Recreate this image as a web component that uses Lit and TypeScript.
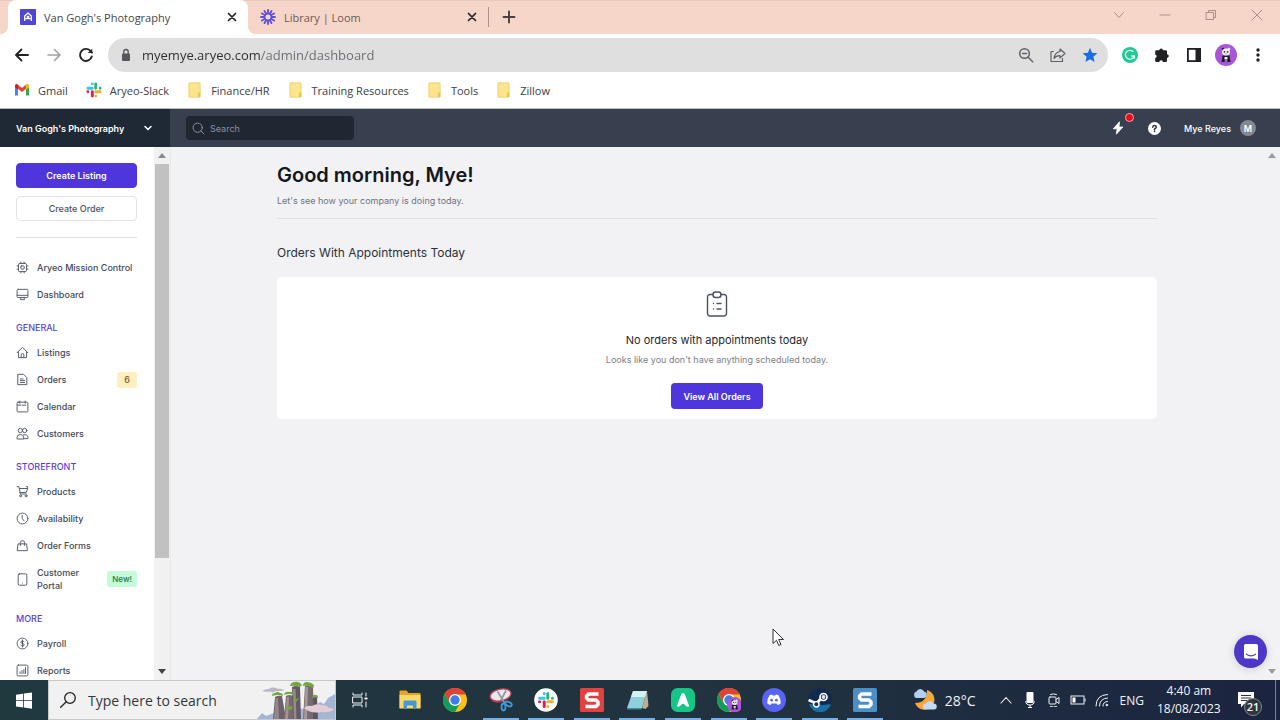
import { LitElement, html, svg, css, nothing, type TemplateResult } from "lit";
import { customElement, property } from "lit/decorators.js";
import { classMap } from "lit/directives/class-map.js";

/* ---------- shared drawing helpers ---------- */

const line = (size: number, body: TemplateResult, box = 24, stroke = 1.5) => html`<svg
  width=${size}
  height=${size}
  viewBox="0 0 ${box} ${box}"
  fill="none"
  stroke="currentColor"
  stroke-width=${stroke}
  stroke-linecap="round"
  stroke-linejoin="round"
  aria-hidden="true"
>${body}</svg>`;

const art = (w: number, h: number, body: TemplateResult) => html`<svg
  width=${w}
  height=${h}
  viewBox="0 0 ${w} ${h}"
  aria-hidden="true"
>${body}</svg>`;

const slackMark = svg`
  <g stroke-width="2.9" stroke-linecap="round" fill="none">
    <path d="M6.3 1.9v.01M1.9 6.3H6.3" stroke="#36c5f0"/>
    <path d="M9.7 1.9V6.3M14.1 6.3v.01" stroke="#2eb67d"/>
    <path d="M9.7 9.7H14.1M9.7 14.1v.01" stroke="#ecb22e"/>
    <path d="M6.3 9.7V14.1M1.9 9.7v.01" stroke="#e01e5a"/>
  </g>`;

const chromeMark = svg`
  <circle cx="12" cy="12" r="12" fill="#fbc116"/>
  <path d="M1.600 6A12 12 0 0 0 12 24l5.200-9L6.800 15Z" fill="#0f9d58"/>
  <path d="M12 6.500H22.700A12 12 0 0 0 1.600 6l5.200 9Z" fill="#db4437"/>
  <circle cx="12" cy="12" r="6" fill="#fff"/>
  <circle cx="12" cy="12" r="4.700" fill="#3f7ee8"/>`;

const panda = svg`
  <circle cx="11" cy="11" r="11" fill="#a855d8"/>
  <path d="M7.500 11.500h7l1 6.500H12.300v-2h-2.600v2H6.500z" fill="#1c1c22"/>
  <path d="M9.500 13h3v2.500h-3z" fill="#f4f4f4"/>
  <circle cx="8" cy="5" r="1.300" fill="#1c1c22"/>
  <circle cx="14" cy="5" r="1.300" fill="#e9e9ee"/>
  <ellipse cx="11" cy="8" rx="4" ry="3.500" fill="#f4f4f4"/>
  <circle cx="9.400" cy="7.800" r=".9" fill="#333"/>
  <circle cx="12.600" cy="7.800" r=".9" fill="#333"/>
  <path d="M10.300 9.600h1.400l-.7.800z" fill="#333"/>`;

const folder = html`${art(16, 16, svg`
  <path d="M2.500.8h10q.7 0 .7.700v13q0 .7-.7.700h-10q-.7 0-.7-.7v-13q0-.7.700-.7z" fill="#fbe48d" stroke="#ecd06b" stroke-width=".8"/>
  <path d="M11 15v-3.500q0-1 1-1h1.200V15z" fill="#e9c64f"/>`)}`;

/* ---------- browser chrome ---------- */

@customElement("browser-chrome")
export class BrowserChrome extends LitElement {
  static styles = css`
    :host {
      display: block;
      font-family: "Open Sans", "Noto Sans", sans-serif;
      color: #3c4043;
      background: #fff;
      border-bottom: 1px solid #b9bcc0;
    }
    svg { display: block; flex: none; }
    button, a { color: inherit; font: inherit; text-decoration: none; }
    button {
      border: 0;
      padding: 0;
      background: none;
      display: grid;
      place-items: center;
    }
    .strip {
      display: flex;
      height: 34px;
      padding-left: 8px;
      box-sizing: border-box;
      background: #f7d6ca;
      box-shadow: inset 0 1px #ecc8bc;
    }
    .tab {
      display: flex;
      align-items: center;
      width: 240px;
      padding: 0 8px 0 12px;
      box-sizing: border-box;
      gap: 8px;
      font-size: 12px;
      position: relative;
      color: #6d5a56;
    }
    .tab.active { background: #fff; border-radius: 8px 8px 0 0; color: #45474a; }
    .tab.active::before, .tab.active::after {
      content: "";
      position: absolute;
      bottom: 0;
      width: 8px;
      height: 8px;
    }
    .tab.active::before { left: -8px; background: radial-gradient(circle at 0 0, transparent 8px, #fff 8px); }
    .tab.active::after { right: -8px; background: radial-gradient(circle at 100% 0, transparent 8px, #fff 8px); }
    .tab .name { flex: 1; white-space: nowrap; font-size: 11px; }
    .close { width: 16px; height: 16px; color: #222; }
    .rule { width: 1px; height: 20px; margin: auto 0; background: #ae918a; }
    .new { width: 40px; color: #4a3f3d; }
    .window { margin-left: auto; display: flex; color: #a98f87; }
    .window button { width: 46px; height: 30px; }
    .bar { display: flex; align-items: center; height: 42px; padding: 0 6px; color: #202124; }
    .bar button { width: 32px; height: 32px; }
    .bar .off { color: #a0a2a5; }
    .omni {
      flex: 1;
      min-width: 0;
      display: flex;
      align-items: center;
      height: 34px;
      margin: 0 6px;
      padding: 0 2px;
      box-sizing: border-box;
      border-radius: 17px;
      background: #dfdfdf;
      color: #5f6368;
    }
    .omni input {
      flex: 1;
      min-width: 0;
      border: 0;
      padding: 0;
      outline: 0;
      font: 13px "Open Sans", "Noto Sans", sans-serif;
      color: transparent;
      background: linear-gradient(90deg, #2b2d30 119px, #686c71 119px);
      background-clip: text;
      -webkit-background-clip: text;
    }
    .marks { display: flex; gap: 18px; height: 32px; padding: 0 14px; }
    .marks a { display: flex; align-items: center; gap: 8px; font-size: 11px; height: 28px; white-space: nowrap; }
  `;

  render() {
    const cross = line(16, svg`<path d="M4.500 4.500l7 7m0-7l-7 7"/>`, 16, 1.7);
    return html`
      <div class="strip">
        <div class="tab active">
          ${art(16, 16, svg`<rect width="16" height="16" rx="1" fill="#5145d8"/>
            <path d="M4.700 12V7L8 4l3.300 3v5M5.500 9.700h5M6.700 8.500L8 7.300l1.300 1.200" fill="none" stroke="#fff" stroke-width="1.300" stroke-linejoin="round"/>`)}
          <span class="name">Van Gogh's Photography</span>
          <button class="close" aria-label="Close tab">${cross}</button>
        </div>
        <div class="tab">
          ${art(16, 16, svg`<g stroke="#5f4fe0" stroke-width="1.900" stroke-linecap="round">
            ${[0, 30, 60, 90, 120, 150, 180, 210, 240, 270, 300, 330].map(
              (a) => svg`<path d="M8 4.600V1" transform="rotate(${a} 8 8)"/>`)}
            </g><circle cx="8" cy="8" r="3.500" fill="none" stroke="#5f4fe0" stroke-width="1.300"/>`)}
          <span class="name">Library | Loom</span>
          <button class="close" aria-label="Close tab">${cross}</button>
        </div>
        <div class="rule"></div>
        <button class="new" aria-label="New tab">${line(16, svg`<path d="M8 2.500v11M2.500 8h11"/>`, 16, 1.9)}</button>
        <div class="window">
          <button aria-label="Search tabs">${line(12, svg`<path d="M1.500 3.500L6 8.500l4.500-5"/>`, 12, 1)}</button>
          <button aria-label="Minimize">${line(12, svg`<path d="M1 6h10"/>`, 12, 1)}</button>
          <button aria-label="Restore">${line(12, svg`<path d="M1.500 3.500h7v7h-7zM3.500 3.500v-2h7v7h-2"/>`, 12, 1)}</button>
          <button aria-label="Close">${line(12, svg`<path d="M1 1l10 10M11 1L1 11"/>`, 12, 1)}</button>
        </div>
      </div>
      <div class="bar">
        <button aria-label="Back">${line(16, svg`<path d="M14 8H2.500M7.500 2.500L2 8l5.500 5.500"/>`, 16, 1.8)}</button>
        <button class="off" aria-label="Forward">${line(16, svg`<path d="M2 8h11.500M8.500 2.500L14 8l-5.500 5.500"/>`, 16, 1.6)}</button>
        <button aria-label="Reload">${line(16, svg`<path d="M13.800 9.500A6 6 0 1 1 12.800 4.300L14 5.600"/><path d="M14.200 1.700v4.400H9.800z" fill="currentColor" stroke="none"/>`, 16, 1.9)}</button>
        <div class="omni">
          <button aria-label="Site information">${art(12, 14, svg`<rect x="2" y="5.500" width="8" height="7.500" rx="1" fill="#54575b"/><path d="M3.800 6V3.700a2.200 2.200 0 0 1 4.400 0V6" fill="none" stroke="#54575b" stroke-width="1.300"/>`)}</button>
          <input aria-label="Address" value="myemye.aryeo.com/admin/dashboard" />
          <button aria-label="Zoom">${line(16, svg`<circle cx="6.500" cy="6.500" r="4.800"/><path d="M10.200 10.200l4.500 4.500M4.500 6.500h4"/>`, 16, 1.5)}</button>
          <button aria-label="Share">${line(16, svg`<path d="M3.500 4.500H1v10h11.500v-3"/><path d="M10 2l5 4.500-5 4.500V8.700C7.500 8.600 5.500 9.500 4 11.500 4.500 8 6.500 5 10 4.500z"/>`, 16, 1.2)}</button>
          <button aria-label="Bookmark">${art(16, 16, svg`<path d="M8 .8l2.100 5 5.300.5-4 3.500 1.200 5.300L8 12.300l-4.600 2.800 1.200-5.300-4-3.500 5.300-.5z" fill="#1a6fe0"/>`)}</button>
        </div>
        <button aria-label="Grammarly">${art(16, 16, svg`<circle cx="8" cy="8" r="8" fill="#22c994"/><path d="M11.500 5A4.500 4.500 0 1 0 12.300 9H9.300M12.400 8.800v3" fill="none" stroke="#e6fff6" stroke-width="1.300"/>`)}</button>
        <button aria-label="Extensions">${art(16, 16, svg`<path d="M5.300 3.200a1.800 1.800 0 0 1 3.600 0h2.900q1.200 0 1.200 1.200v2.900a1.800 1.800 0 0 1 0 3.600v2.900q0 1.200-1.200 1.200H8.900a1.800 1.800 0 0 0-3.600 0H2.400q-1.200 0-1.200-1.200v-2.700a1.900 1.900 0 0 0 0-3.700v-3q0-1.200 1.200-1.200z" fill="#202124"/>`)}</button>
        <button aria-label="Side panel">${art(16, 16, svg`<rect x="1.900" y="1.900" width="12.200" height="12.200" fill="none" stroke="#202124" stroke-width="1.800"/><path d="M9.500 1.500h5v13h-5z" fill="#202124"/>`)}</button>
        <button aria-label="Profile">${art(22, 22, panda)}</button>
        <button aria-label="Menu">${art(4, 14, svg`<g fill="#202124"><circle cx="2" cy="2" r="1.700"/><circle cx="2" cy="7" r="1.700"/><circle cx="2" cy="12" r="1.700"/></g>`)}</button>
      </div>
      <nav class="marks">
        <a href="#">${art(16, 16, svg`<path d="M1 13.500V4l3 2.500v7z" fill="#4285f4"/><path d="M15 13.500V4l-3 2.500v7z" fill="#34a853"/><path d="M1 4.500v-1q1-2 3-.7L8 6l4-3.200q2-1.300 3 .7v1L8 10z" fill="#ea4335"/><path d="M12 2.800q2-1.300 3 .7v1.700L12 7.500z" fill="#fbbc04"/><path d="M4 2.800Q2 1.500 1 3.500v1.700L4 7.500z" fill="#c5221f"/>`)}Gmail</a>
        <a href="#">${art(16, 16, slackMark)}Aryeo-Slack</a>
        ${["Finance/HR", "Training Resources", "Tools", "Zillow"].map((n) => html`<a href="#">${folder}${n}</a>`)}
      </nav>
    `;
  }
}

/* ---------- admin sidebar ---------- */

interface NavItem { label: string; icon: TemplateResult; badge?: string; tone?: string }
interface NavGroup { title?: string; items: NavItem[] }

const groups: NavGroup[] = [
  {
    items: [
      { label: "Aryeo Mission Control", icon: svg`<rect x="4.500" y="4.500" width="15" height="15" rx="2.500"/><rect x="9" y="9" width="6" height="6" rx="1"/><path d="M9 4.500V2M15 4.500V2M9 22v-2.500M15 22v-2.500M4.500 9H2M4.500 15H2M22 9h-2.500M22 15h-2.500"/>` },
      { label: "Dashboard", icon: svg`<rect x="2" y="2.500" width="20" height="15" rx="2"/><path d="M2 13.500h20M9.500 17.500l-1.500 4h8l-1.500-4"/>` },
    ],
  },
  {
    title: "General",
    items: [
      { label: "Listings", icon: svg`<path d="M2 12.500L12 2.500l10 10M4.500 10.500V21.500h15v-11M9.500 21.500v-5a2.500 2.500 0 0 1 5 0v5"/>` },
      { label: "Orders", badge: "6", tone: "amber", icon: svg`<path d="M4 2.500h10l6 6v13H4zM8 11h5M8 14h8M8 17.500h8"/>` },
      { label: "Calendar", icon: svg`<rect x="2" y="4" width="20" height="18" rx="2"/><path d="M2.500 9.500h7M12 9.500h6M7 6V2M17 6V2"/>` },
      { label: "Customers", icon: svg`<circle cx="8" cy="6.500" r="4"/><circle cx="16" cy="6.500" r="4"/><path d="M2 21.500v-2.500q0-5 6-5t6 5v2.500zM14 14.500q8-1.500 8 4.500v2.500h-8"/>` },
    ],
  },
  {
    title: "Storefront",
    items: [
      { label: "Products", icon: svg`<path d="M2 3h3.500l2.500 13.500h11M6.200 6.500H21.500L19 13.500 7.500 14"/><path d="M21.500 6.500V3H19"/><circle cx="8.500" cy="20" r="1.800"/><circle cx="18.500" cy="20" r="1.800"/>` },
      { label: "Availability", icon: svg`<circle cx="12" cy="12" r="10"/><path d="M11.500 6v6l3.500 4.500"/>` },
      { label: "Order Forms", icon: svg`<path d="M4.500 9h15l1.500 12.500H3zM8 12V7a4 4 0 0 1 8 0v5"/>` },
      { label: "Customer Portal", badge: "New!", tone: "green", icon: svg`<rect x="4" y="1.500" width="16" height="21" rx="2.500"/><path d="M12 18.500v.01"/>` },
    ],
  },
  {
    title: "More",
    items: [
      { label: "Payroll", icon: svg`<circle cx="12" cy="12" r="10"/><path d="M15 9q-1-1.700-3-1.700-3 0-3 2.300 0 2 3 2.400t3 2.400q0 2.300-3 2.300-2 0-3-1.700M12 5.500v13"/>` },
      { label: "Reports", icon: svg`<rect x="2" y="2" width="20" height="20" rx="2.500"/><path d="M7.500 17.500v-3M11 17.500v-5M14.500 17.500v-7M17.500 17.500v-11"/>` },
    ],
  },
];

@customElement("side-nav")
export class SideNav extends LitElement {
  static styles = css`
    :host {
      display: flex;
      flex: none;
      width: 170px;
      background: #fff;
      font-family: Inter, sans-serif;
      overflow: hidden;
    }
    svg { display: block; flex: none; }
    .content { flex: 1; min-width: 0; padding: 16px 17px 0 16px; overflow: hidden; }
    .actions { display: grid; gap: 8px; padding-bottom: 16px; border-bottom: 1px solid #e2e3e8; margin-bottom: 16px; }
    button {
      height: 25px;
      border: 1px solid #e3e4e8;
      border-radius: 4px;
      padding: 0;
      font: 500 9px Inter, sans-serif;
      background: #fff;
      color: #50535f;
    }
    button.primary { background: #4f35dc; border-color: #4f35dc; color: #fff; font-weight: 600; }
    h2 {
      margin: 12px 0 3px;
      font-size: 9px;
      font-weight: 500;
      line-height: 16px;
      text-transform: uppercase;
      color: #5a3fd8;
    }
    ul { margin: 0; padding: 0; list-style: none; }
    a {
      display: flex;
      align-items: center;
      gap: 8px;
      padding: 7px 0;
      font-size: 9px;
      font-weight: 500;
      line-height: 13px;
      color: #434959;
      text-decoration: none;
    }
    a svg { color: #565c6d; }
    .label { flex: 1; }
    .single { white-space: nowrap; }
    .badge { margin: -2px 0; padding: 1px 5px; border-radius: 3px; font-size: 8px; line-height: 14px; }
    .amber { background: #fdefbf; color: #8a5a28; padding: 1px 7px; font-size: 9px; }
    .green { background: #c4fbd9; color: #23794c; }
    .scroll { width: 16px; background: #f1f1f1; display: flex; flex-direction: column; align-items: center; }
    .scroll svg { margin: 6px 0; }
    .track { flex: 1; width: 14px; }
    .thumb { height: 79%; background: #c1c1c1; }
  `;

  render() {
    return html`
      <div class="content">
        <div class="actions">
          <button class="primary">Create Listing</button>
          <button>Create Order</button>
        </div>
        <nav>
          ${groups.map((g) => html`
            ${g.title ? html`<h2>${g.title}</h2>` : nothing}
            <ul>
              ${g.items.map((i) => html`<li><a href="#">
                ${line(13, i.icon, 24, 1.8)}
                <span class=${classMap({ label: true, single: !i.badge })}>${i.label}</span>
                ${i.badge ? html`<span class="badge ${i.tone}">${i.badge}</span>` : nothing}
              </a></li>`)}
            </ul>`)}
        </nav>
      </div>
      <div class="scroll" aria-hidden="true">
        ${art(8, 5, svg`<path d="M4 0l4 5H0z" fill="#8b8b8b"/>`)}
        <div class="track"><div class="thumb"></div></div>
        ${art(8, 5, svg`<path d="M4 5l4-5H0z" fill="#444"/>`)}
      </div>
    `;
  }
}

/* ---------- admin page ---------- */

@customElement("admin-page")
export class AdminPage extends LitElement {
  static styles = css`
    :host {
      display: flex;
      flex-direction: column;
      min-height: 0;
      font-family: Inter, sans-serif;
      background: #f2f2f5;
      position: relative;
    }
    svg { display: block; flex: none; }
    button { font: inherit; border: 0; padding: 0; background: none; color: inherit; }
    header { display: flex; height: 38px; flex: none; background: #383f4f; color: #fff; font-size: 9px; }
    .company {
      width: 170px;
      box-sizing: border-box;
      padding: 0 18px 0 16px;
      display: flex;
      align-items: center;
      justify-content: space-between;
      background: #1f2835;
      font-weight: 600;
    }
    .search {
      display: flex;
      align-items: center;
      gap: 5px;
      width: 168px;
      height: 24px;
      box-sizing: border-box;
      margin: 7px 0 0 16px;
      padding: 0 6px;
      border-radius: 4px;
      background: #1f2733;
      color: #8b919c;
    }
    .search input { flex: 1; min-width: 0; border: 0; padding: 0; outline: 0; background: none; color: #fff; font: 9px Inter, sans-serif; }
    .search input::placeholder { color: #8b919c; opacity: 1; }
    .tools { margin-left: auto; padding-right: 24px; display: flex; align-items: center; }
    .tools .tool { width: 36px; display: grid; place-items: center; position: relative; }
    .dot { position: absolute; right: 2px; top: -8px; width: 9px; height: 9px; box-sizing: border-box; border-radius: 50%; background: #f00514; border: 1px solid #e8b0b4; }
    .user { display: flex; align-items: center; gap: 9px; padding-left: 12px; font-weight: 500; }
    .face { width: 16px; height: 16px; border-radius: 50%; background: #858994; display: grid; place-items: center; font-weight: 600; }
    .body { flex: 1; min-height: 0; display: flex; }
    main { flex: 1; min-width: 0; padding: 16px 24px 0; overflow: hidden; box-shadow: inset 1px 0 #e9e9ed; }
    .inner { max-width: 880px; margin: 0 auto; }
    h1 { margin: 0; font-size: 20px; font-weight: 600; line-height: 24px; color: #15171c; }
    .sub { margin: 6px 0 0; padding-bottom: 9px; border-bottom: 1px solid #dfe0e4; font-size: 9px; line-height: 16px; color: #70737c; }
    h2 { margin: 26px 0 16px; font-size: 12px; font-weight: 400; line-height: 16px; color: #2c303d; }
    .card { display: flex; flex-direction: column; align-items: center; padding: 13px 16px 10px; border-radius: 5px; background: #fff; color: #4a5164; }
    h3 { margin: 14px 0 4px; font-size: 11px; font-weight: 400; line-height: 16px; color: #25272e; }
    .card p { margin: 0 0 15px; font-size: 9px; line-height: 16px; color: #7b7e87; }
    .card button { height: 26px; padding: 0 12px; border-radius: 4px; background: #4f35dc; color: #fff; font-size: 9px; font-weight: 600; }
    .scroll { width: 16px; display: flex; flex-direction: column; justify-content: space-between; align-items: center; padding: 6px 0; box-sizing: border-box; }
    .chat { position: absolute; right: 13px; bottom: 12px; width: 33px; height: 33px; border-radius: 50%; display: grid; place-items: center; background: #4d37c8; box-shadow: 0 1px 8px rgba(0, 0, 0, 0.15); }
    .pointer { position: absolute; left: 772px; top: 519px; }
  `;

  render() {
    return html`
      <header>
        <button class="company">Van Gogh's Photography ${line(8, svg`<path d="M1 2.500l3 3 3-3"/>`, 8, 1.5)}</button>
        <label class="search">
          ${line(13, svg`<circle cx="10.500" cy="10.500" r="8.500"/><path d="M17 17l5 5"/>`, 24, 1.8)}
          <input type="search" placeholder="Search" aria-label="Search" />
        </label>
        <div class="tools">
          <button class="tool" aria-label="What's new">${art(12, 14, svg`<path d="M7.500.8L1.300 7.800h3.900L4.300 13.200 10.900 6H7z" fill="#fff" stroke="#fff" stroke-width=".8" stroke-linejoin="round"/>`)}<span class="dot"></span></button>
          <button class="tool" aria-label="Help">${art(13, 13, svg`<circle cx="6.500" cy="6.500" r="6.500" fill="#fff"/><path d="M4.700 5.200Q4.800 3.500 6.500 3.500T8.300 5.100Q8.300 6 7.200 6.500 6.500 6.900 6.500 7.700M6.500 9.300v.3" fill="none" stroke="#303746" stroke-width="1.500" stroke-linecap="round"/>`)}</button>
          <button class="user">Mye Reyes <span class="face">M</span></button>
        </div>
      </header>
      <div class="body">
        <side-nav></side-nav>
        <main>
          <div class="inner">
            <h1>Good morning, Mye!</h1>
            <p class="sub">Let's see how your company is doing today.</p>
            <h2>Orders With Appointments Today</h2>
            <section class="card">
              ${line(28, svg`<path d="M10 4.500H7a2.500 2.500 0 0 0-2.500 2.500V23.500a2.500 2.500 0 0 0 2.500 2.500h14a2.500 2.500 0 0 0 2.500-2.500V7a2.500 2.500 0 0 0-2.500-2.500H18"/><rect x="10" y="2" width="8" height="5.500" rx="2.500"/><path d="M10.500 13.500v.01M10.500 19v.01M14 13.500h4M14 19h4"/>`, 28, 1.4)}
              <h3>No orders with appointments today</h3>
              <p>Looks like you don't have anything scheduled today.</p>
              <button>View All Orders</button>
            </section>
          </div>
        </main>
        <div class="scroll" aria-hidden="true">
          ${art(8, 5, svg`<path d="M4 0l4 5H0z" fill="#9b9b9b"/>`)}
          ${art(8, 5, svg`<path d="M4 5l4-5H0z" fill="#9b9b9b"/>`)}
        </div>
      </div>
      <button class="chat" aria-label="Open chat">${art(16, 18, svg`<path d="M2.500 1h11q1.500 0 1.500 1.500V17l-3.500-1.500h-9Q1 15.500 1 14V2.500Q1 1 2.500 1z" fill="#fff"/><path d="M3.500 11.200q4.500 3.300 9 0" fill="none" stroke="#4d37c8" stroke-width="1.200" stroke-linecap="round"/>`)}</button>
      <svg class="pointer" width="13" height="19" viewBox="0 0 13 19" aria-hidden="true"><path d="M1 1v14.500l3.500-3.200 2.300 5.200 2.200-1-2.300-5h4.800z" fill="#fff" stroke="#333" stroke-width="1"/></svg>
    `;
  }
}

/* ---------- desktop taskbar ---------- */

interface TaskApp { name: string; icon: TemplateResult; open: boolean }

const snagitMark = svg`<path d="M18.500 6H8.500L6.500 8v2l2 2h7.500l2 2v2.500l-2 2H5.500" fill="none" stroke="#fff" stroke-width="3.400" stroke-linejoin="round"/>`;

const apps: TaskApp[] = [
  { name: "File Explorer", open: false, icon: svg`<path d="M1.500 3.500q0-1 1-1h6l2 2.500h11q1 0 1 1V20h-21z" fill="#e5a51f"/><path d="M1.500 7h21v13.500h-21z" fill="#fbd869"/><path d="M5.500 20.500V13.500q0-1 1-1h11q1 0 1 1v7h-3.500V17.500H9v3z" fill="#4497d8"/>` },
  { name: "Chrome", open: false, icon: chromeMark },
  { name: "Snipping Tool", open: true, icon: svg`<ellipse cx="11.500" cy="7" rx="10.500" ry="5.800" fill="#ece9ee" stroke="#c9485a" stroke-width="1.400" transform="rotate(-12 11.500 7)"/><path d="M8.500 3.500l7.500 12M17 2.500L11.500 13" stroke="#8f99a5" stroke-width="1.700"/><path d="M3 12.500q5 2.500 10 .5" stroke="#b53c4e" stroke-width="1.800" fill="none"/><ellipse cx="14.500" cy="19" rx="2" ry="3.500" fill="none" stroke="#3f9ad8" stroke-width="1.800"/><ellipse cx="19.500" cy="16" rx="3.500" ry="2" fill="none" stroke="#3f9ad8" stroke-width="1.800" transform="rotate(25 19.500 16)"/>` },
  { name: "Slack", open: true, icon: svg`<circle cx="12" cy="12" r="11.800" fill="#fff"/><g transform="translate(3.600 3.600) scale(1.050)">${slackMark}</g>` },
  { name: "Snagit", open: true, icon: svg`<rect width="24" height="24" rx="1.500" fill="#e2413f"/>${snagitMark}` },
  { name: "Notepad", open: true, icon: svg`<path d="M8 3h14l-5 17H2z" fill="#8fd0dc"/><path d="M8 3h14l-1.800 6H6z" fill="#d6eff2"/><path d="M22 3l1.500 15-3 3-3.500-1z" fill="#b9ae97"/><path d="M2 20h15l-.6 1.500H2.600z" fill="#3d8d9f"/>` },
  { name: "Aryeo", open: true, icon: svg`<rect width="24" height="24" rx="6.500" fill="#17c587"/><path d="M12 5q1.300 0 1.900 1.500l4.300 11.800q-2.500 1-3.700-.8-1.200-1.700-2.500-1.700t-2.500 1.700q-1.200 1.800-3.700.8L10.100 6.500Q10.700 5 12 5z" fill="#fff"/>` },
  { name: "Chrome profile", open: true, icon: svg`${chromeMark}<g transform="translate(10 9) scale(.7)">${panda}</g>` },
  { name: "Discord", open: true, icon: svg`<circle cx="12" cy="12" r="12" fill="#5865f2"/><path d="M7.500 7.300Q9 6.600 10 6.600l.5.900h3l.5-.9q1 0 2.500.7 2.700 4 2.300 8-1.600 1.400-3.300 1.700l-.9-1.400H9.400L8.500 17Q6.800 16.700 5.200 15.300q-.4-4 2.300-8z" fill="#fff"/><circle cx="9.600" cy="12.200" r="1.400" fill="#5865f2"/><circle cx="14.400" cy="12.200" r="1.400" fill="#5865f2"/>` },
  { name: "Steam", open: true, icon: svg`<circle cx="12" cy="12" r="11.800" fill="#102a50"/><path d="M.9 16A11.500 11.500 0 0 0 23 16l-8 1z" fill="#1b6fa8"/><path d="M.6 12L8.500 15.500l5-5.500" fill="none" stroke="#fff" stroke-width="3"/><circle cx="8.300" cy="16.300" r="2.700" fill="#12315e" stroke="#fff" stroke-width="1.400"/><circle cx="15.500" cy="9" r="3.500" fill="#12315e" stroke="#fff" stroke-width="1.700"/><circle cx="15.500" cy="9" r="1.900" fill="#dfe6ee"/>` },
  { name: "Snagit Editor", open: true, icon: svg`<rect width="24" height="24" rx="1.500" fill="#4a8fc6"/>${snagitMark}` },
];

@customElement("task-bar")
export class TaskBar extends LitElement {
  @property() time = "4:40 am";
  @property() date = "18/08/2023";

  static styles = css`
    :host {
      display: flex;
      align-items: stretch;
      height: 40px;
      color: #f2f5f7;
      background: linear-gradient(90deg, #20393f, #20323f 60%, #1b2440);
      font-family: "Open Sans", "Noto Sans", sans-serif;
    }
    svg { display: block; flex: none; }
    button { font: inherit; border: 0; padding: 0; background: none; color: inherit; display: grid; place-items: center; }
    .start { width: 48px; }
    .search {
      display: flex;
      align-items: center;
      gap: 12px;
      width: 288px;
      padding-left: 11px;
      box-sizing: border-box;
      border: 1px solid #c6c9cb;
      background: #f1f1f2;
      color: #222;
      overflow: hidden;
    }
    .search input { flex: 1; min-width: 0; border: 0; padding: 0; outline: 0; background: none; font: 14px "Open Sans", "Noto Sans", sans-serif; color: #222; }
    .search input::placeholder { color: #33373b; opacity: 1; }
    .view { width: 48px; }
    .apps { width: 504px; display: grid; grid-auto-flow: column; grid-auto-columns: 1fr; padding-left: 3px; box-sizing: border-box; }
    .app { padding: 0 5px; align-items: center; }
    .open { background: linear-gradient(#76b0e6, #76b0e6) center bottom / 36px 2px no-repeat; }
    .tray { margin-left: auto; display: flex; align-items: stretch; }
    .weather { display: grid; grid-auto-flow: column; gap: 7px; font-size: 14px; padding-right: 18px; }
    .mini { width: 24px; }
    .lang { padding: 0 13px 0 6px; font-size: 12px; }
    .clock { width: 62px; font-size: 12px; line-height: 18px; align-content: center; white-space: nowrap; }
    .notes { width: 54px; margin-right: 2px; position: relative; }
    .count { position: absolute; left: 25px; top: 18px; width: 18px; height: 18px; box-sizing: border-box; border: 1px solid #85878c; border-radius: 50%; background: #30343c; font-size: 11px; font-weight: 600; line-height: 16px; text-align: center; }
    .edge { width: 4px; border-left: 1px solid #78808f; }
  `;

  render() {
    return html`
      <button class="start" aria-label="Start">${art(16, 17, svg`<path d="M0 2.700L7 1.700V8.200H0zM7.800 1.600L16 .4v7.800H7.800zM0 9h7v6.500l-7-1zM7.800 9H16v7.800l-8.200-1.200z" fill="#fff"/>`)}</button>
      <label class="search">
        ${line(16, svg`<circle cx="10" cy="6" r="5.300"/><path d="M6 10L.7 15.300"/>`, 16, 1.3)}
        <input type="search" placeholder="Type here to search" aria-label="Type here to search" />
        ${art(78, 38, svg`
          <path d="M0 38l5-6 4 3 8-3 40-6 6-5 4 2 4-6 7-4V38z" fill="#a3b6d2"/>
          <path d="M5 10q3-2 7-2 3-2.500 8-.5 4 0 8 1.500-4 1.500-9 1-3 2-6 .5-4 .5-8-.5z" fill="#bcb5c6"/>
          <path d="M16 38l2-22q3-2 7-1l4 23z" fill="#6d626b"/>
          <path d="M17 38l1.500-21h2.500l1 21z" fill="#94868a"/>
          <path d="M27 38l2-23q3-2 7 0l2 23z" fill="#776a72"/>
          <path d="M28 38l2-22h2l-1 22z" fill="#a39493"/>
          <path d="M36 38L35 6q4-2 8 0l1 32z" fill="#645a66"/>
          <path d="M36 8h2.500l1 30H37z" fill="#988a8d"/>
          <path d="M46 38l2-33q4-2 8 0l1 33z" fill="#776a72"/>
          <path d="M48.500 6h2.500l-1 32h-3z" fill="#a89a98"/>
          <path d="M56 38V16q2-1 4 0l1 22z" fill="#5f5562"/>
          <g fill="#73a83c">
            <path d="M15 15q0-3 3-3 2-2 5 0 3 0 3 3-5-2-11 0z"/>
            <path d="M27 14q1-4 5-3 4-1 5 3-5-2-10 0z"/>
            <path d="M33 5q1-4 5-4 4-1 7 3l-2 2q-5-2-10-1z"/>
            <path d="M46 5q0-4 4-4t7 3q0 2-1 3-4-3-10-2z"/>
            <path d="M55 17q1-4 4-3 2 0 2 3-3-1-6 0z"/>
            <path d="M28 27q4-3 8-1l-2 3q-3-1-6 0zM36 19l6-2-3 4z"/>
          </g>
          <path d="M47 27q3-3 8-2 4-3 9-1 6 0 8 3 4 0 5 2-6 3-13 2-10 2-17-4z" fill="#e3ccd4"/>`)}
      </label>
      <button class="view" aria-label="Task view">${line(16, svg`<path d="M1 1v2h9V1M1 15v-2h9v2M1 5h9v6H1zM14 1v3M14 10v5"/><path d="M13.300 6.500h1.400" stroke-width="2"/>`, 16, 1)}</button>
      <div class="apps">
        ${apps.map((a) => html`<button class=${classMap({ app: true, open: a.open })} aria-label=${a.name}>${art(24, 24, a.icon)}</button>`)}
      </div>
      <div class="tray">
        <button class="weather">${art(26, 24, svg`<path d="M15 2A10 10 0 1 1 3 15Q15 15 15 2z" fill="#f4a93a"/><path d="M4 10a3.500 3.500 0 0 1 .5-6.500 4 4 0 0 1 7.500 0A3.300 3.300 0 0 1 12 10z" fill="#b7cdf0"/><path d="M14 21.500a3 3 0 0 1 0-6 4 4 0 0 1 7.500 0 3 3 0 0 1 .5 6z" fill="#c9daf5"/>`)}<span>28°C</span></button>
        <button class="mini" aria-label="Show hidden icons">${line(12, svg`<path d="M1 9l5-5.500L11 9"/>`, 12, 1.1)}</button>
        <button class="mini" aria-label="Microphone">${art(10, 16, svg`<rect x="1.500" y="0" width="7" height="11" rx="1" fill="#fff"/><path d="M.8 9q0 4 4.200 4t4.200-4M5 13v2.500M3 15.500h4" fill="none" stroke="#fff"/>`)}</button>
        <button class="mini" aria-label="Meet now">${line(14, svg`<rect x="2" y="4" width="7" height="7" rx="1"/><path d="M9 6.500l3-2v6l-3-2M3.500 1.500q3-1.300 6 0M3.500 13.500q3 1.300 6 0"/>`, 14, 1)}</button>
        <button class="mini" aria-label="Battery">${art(16, 10, svg`<rect x="1" y="1" width="13" height="8" fill="none" stroke="#eef"/><path d="M2.500 2.500h3v5h-3z" fill="#fff"/><path d="M15 3.500v3" stroke="#eef"/>`)}</button>
        <button class="mini" aria-label="Network">${line(14, svg`<path d="M1 13Q1 2 12.500 1.500M4.500 13Q4.500 5.500 12.500 5M8 13q0-4.500 4.500-4.500"/><circle cx="11.800" cy="12" r=".8" fill="currentColor"/>`, 14, 1)}</button>
        <button class="lang">ENG</button>
        <button class="clock"><span>${this.time}</span><span>${this.date}</span></button>
        <button class="notes" aria-label="Notifications">${art(18, 20, svg`<path d="M1 2h16v12H7l-3 3.500V14H1z" fill="#fff"/><path d="M4 5.500h10M4 8h10M4 10.500h7" stroke="#2a3142"/>`)}<span class="count">21</span></button>
        <div class="edge"></div>
      </div>
    `;
  }
}

@customElement("app-root")
export class AppRoot extends LitElement {
  static styles = css`
    :host { display: flex; flex-direction: column; height: 100vh; overflow: hidden; }
    browser-chrome, task-bar { flex: none; }
    admin-page { flex: 1; }
  `;

  render() {
    return html`<browser-chrome></browser-chrome><admin-page></admin-page><task-bar></task-bar>`;
  }
}
